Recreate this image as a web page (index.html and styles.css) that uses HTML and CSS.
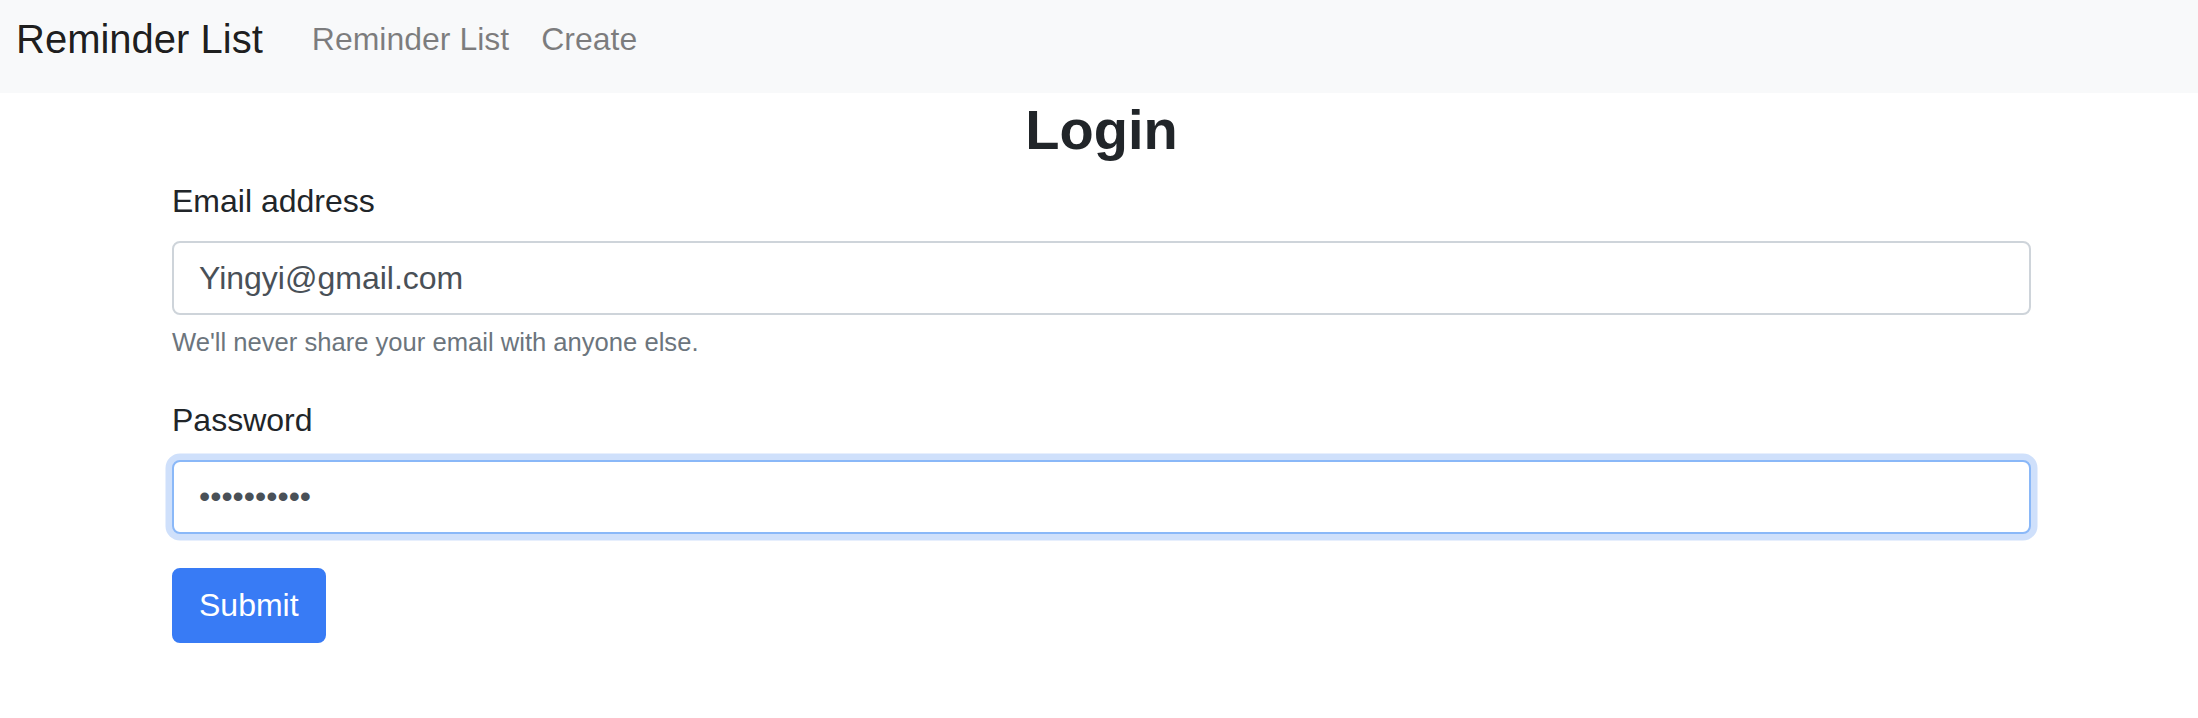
FILE: index.html
```html
<!DOCTYPE html>
<html lang="en">
<head>
<meta charset="utf-8">
<title>Reminder List - Login</title>
<link rel="stylesheet" href="styles.css">
</head>
<body>
<nav class="navbar">
  <a class="brand" href="#">Reminder List</a>
  <ul class="nav">
    <li><a class="nav-link" href="#">Reminder List</a></li>
    <li><a class="nav-link" href="#">Create</a></li>
  </ul>
</nav>
<main class="container">
  <h2 class="title">Login</h2>
  <form class="login-form">
    <div class="form-group">
      <label class="label" for="email">Email address</label>
      <input class="input" id="email" type="email" value="Yingyi@gmail.com">
      <small class="hint">We'll never share your email with anyone else.</small>
    </div>
    <div class="form-group">
      <label class="label" for="password">Password</label>
      <input class="input input-focus" id="password" type="password" value="password12">
    </div>
    <button class="btn" type="button">Submit</button>
  </form>
</main>
</body>
</html>
```

FILE: styles.css
```css
* { box-sizing: border-box; }

html, body {
  margin: 0;
  padding: 0;
  background: #ffffff;
  font-family: "Liberation Sans", Arial, Helvetica, sans-serif;
  color: #212529;
}

.navbar {
  display: flex;
  align-items: center;
  height: 93px;
  padding: 8.5px 16px 24.5px;
  background: #f8f9fa;
}

.brand {
  font-size: 40px;
  line-height: 60px;
  color: rgba(0, 0, 0, 0.9);
  text-decoration: none;
  margin-right: 33px;
  white-space: nowrap;
}

.nav {
  display: flex;
  list-style: none;
  margin: 0;
  padding: 0;
}

.nav-link {
  display: block;
  padding: 0 16px;
  font-size: 32px;
  line-height: 48px;
  color: rgba(0, 0, 0, 0.5);
  text-decoration: none;
  white-space: nowrap;
}

.container {
  padding: 0 167px 0 172px;
}

.title {
  margin: 3px 0 14px;
  font-size: 56px;
  line-height: 67.2px;
  font-weight: 700;
  text-align: center;
  color: #212529;
}

.form-group {
  margin-bottom: 34px;
}

.label {
  display: block;
  margin-bottom: 16px;
  font-size: 32px;
  line-height: 48px;
  color: #212529;
}

.input {
  display: block;
  width: 100%;
  height: 74px;
  margin: 0;
  padding: 0 25px;
  font-family: "Liberation Sans", Arial, Helvetica, sans-serif;
  font-size: 32px;
  color: #495057;
  background: #ffffff;
  border: 2px solid #ced4da;
  border-radius: 8px;
  outline: none;
}

.input-focus {
  border-color: #8ab8f8;
  box-shadow: 0 0 0 6.5px #cfe0fb;
}

.hint {
  display: block;
  margin-top: 8px;
  font-size: 25.6px;
  line-height: 38.4px;
  color: #6c757d;
}

.btn {
  display: inline-block;
  height: 75px;
  padding: 0 25px;
  font-family: "Liberation Sans", Arial, Helvetica, sans-serif;
  font-size: 32px;
  color: #ffffff;
  background: #387bf5;
  border: 2px solid #387bf5;
  border-radius: 8px;
  cursor: pointer;
}
```
